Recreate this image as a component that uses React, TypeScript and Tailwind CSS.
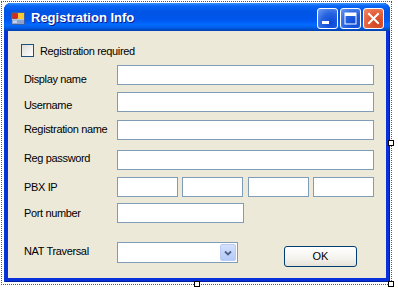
const labelFont = "font-['Liberation_Sans',Arial,sans-serif] text-[11px] leading-[13px] tracking-[-0.35px] text-black"

function Field({ w }: { w: string }) {
  return <div className={`${w} h-[20px] border border-[#7f9db9] bg-white`} />
}

function Row({ label, mt, pt, children }: { label: string; mt: string; pt: string; children: React.ReactNode }) {
  return (
    <div className={`${mt} flex items-start h-[20px] pl-[16px]`}>
      <div className={`w-[93px] ${pt} ${labelFont} whitespace-nowrap`}>{label}</div>
      {children}
    </div>
  )
}

function TitleButton({ kind }: { kind: 'min' | 'max' | 'close' }) {
  const bg =
    kind === 'close'
      ? 'bg-[radial-gradient(circle_at_70%_75%,#cc4622_0%,#e35a33_45%,#f08b68_100%)]'
      : 'bg-[radial-gradient(circle_at_70%_75%,#0c48d8_0%,#2663e0_50%,#6d9cf5_100%)]'
  return (
    <div className={`w-[21px] h-[21px] rounded-[3px] border border-white ${bg} flex items-center justify-center`}>
      <svg width="19" height="19" viewBox="0 0 19 19">
        {kind === 'min' && <rect x="4" y="12" width="7" height="3" fill="#fff" />}
        {kind === 'max' && (
          <>
            <rect x="4" y="4" width="11" height="11" fill="none" stroke="#fff" strokeWidth="1" />
            <rect x="4" y="4" width="11" height="3" fill="#fff" />
          </>
        )}
        {kind === 'close' && (
          <path d="M5 5 L14 14 M14 5 L5 14" stroke="#fff" strokeWidth="2" strokeLinecap="square" />
        )}
      </svg>
    </div>
  )
}

function Handle({ pos }: { pos: string }) {
  return <div className={`absolute ${pos} w-[6px] h-[6px] bg-white border border-black`} />
}

export default function App() {
  return (
    <div className="w-[398px] h-[294px] bg-white overflow-hidden">
      <div className="relative ml-[1px] mt-[1px] w-[391px] h-[284px] border border-dotted border-[#555] pl-[2px] pt-[1px]">
        <div className="w-[386px] h-[279px] rounded-t-[7px] bg-[#0831d9] flex flex-col overflow-hidden shadow-[inset_-1px_0_0_#001ea0,inset_1px_0_0_#0a3ad0,inset_0_-1px_0_#001ea0]">
          {/* title bar */}
          <div className="h-[28px] flex items-start bg-[linear-gradient(180deg,#3d95ff_0%,#0a66f5_10%,#0055e5_30%,#0055eb_56%,#005bf5_66%,#026afe_76%,#0062ef_86%,#0052d6_92%,#0040ab_100%)]">
            <svg className="ml-[7px] mt-[9px]" width="14" height="13" viewBox="0 0 14 13">
              <rect x="0.5" y="0.5" width="13" height="12" fill="#dfe8f7" stroke="#3b5ea8" />
              <rect x="1.5" y="1.5" width="5" height="5" fill="#d8281e" stroke="#7a1a12" strokeWidth="0.6" />
              <rect x="7" y="1" width="6" height="6" fill="#f7c735" />
              <rect x="1" y="7.5" width="12" height="4.5" fill="#8aa2cc" />
              <rect x="2" y="8.5" width="4" height="2.5" fill="#c5d3ee" />
            </svg>
            <div className="ml-[6px] mt-[7px] font-['Liberation_Sans',Arial,sans-serif] font-bold text-[13px] leading-[16px] text-white [text-shadow:1px_1px_#0a1a8c] whitespace-nowrap">
              Registration Info
            </div>
            <div className="ml-auto mr-[6px] mt-[5px] flex gap-[2px]">
              <TitleButton kind="min" />
              <TitleButton kind="max" />
              <TitleButton kind="close" />
            </div>
          </div>

          {/* client area */}
          <div className="mx-[4px] mb-[4px] flex-1 bg-[#ece9d8] pt-[13px]">
            <div className="ml-[13px] flex items-start h-[13px]">
              <div className="w-[13px] h-[13px] border border-[#1c5180] bg-[linear-gradient(135deg,#dcdcd7,#ffffff)]" />
              <div className={`ml-[6px] pt-[1px] ${labelFont} whitespace-nowrap`}>Registration required</div>
            </div>

            <Row label="Display name" mt="mt-[8px]" pt="pt-[8px]">
              <Field w="w-[257px]" />
            </Row>
            <Row label="Username" mt="mt-[7px]" pt="pt-[7px]">
              <Field w="w-[257px]" />
            </Row>
            <Row label="Registration name" mt="mt-[8px]" pt="pt-[3px]">
              <Field w="w-[257px]" />
            </Row>
            <Row label="Reg password" mt="mt-[10px]" pt="pt-[2px]">
              <Field w="w-[257px]" />
            </Row>
            <Row label="PBX IP" mt="mt-[7px]" pt="pt-[4px]">
              <div className="w-[257px] flex justify-between">
                <Field w="w-[61px]" />
                <Field w="w-[61px]" />
                <Field w="w-[61px]" />
                <Field w="w-[61px]" />
              </div>
            </Row>
            <Row label="Port number" mt="mt-[6px]" pt="pt-[4px]">
              <Field w="w-[127px]" />
            </Row>

            <div className="mt-[19px] flex items-start h-[21px] pl-[16px]">
              <div className={`w-[93px] pt-[3px] ${labelFont} whitespace-nowrap`}>NAT Traversal</div>
              <div className="w-[121px] h-[21px] border border-[#7f9db9] bg-white flex justify-end p-[1px]">
                <div className="w-[16px] h-full rounded-[2px] border border-[#b9cbf3] bg-[linear-gradient(180deg,#d4e0fd,#b3c9f8)] flex items-center justify-center">
                  <svg width="8" height="6" viewBox="0 0 8 6">
                    <path d="M1 1.5 L4 4.5 L7 1.5" fill="none" stroke="#4d6185" strokeWidth="1.8" />
                  </svg>
                </div>
              </div>
              <div className="ml-[46px] mt-[4px] w-[73px] h-[21px] rounded-[3px] border border-[#003c74] bg-[linear-gradient(180deg,#ffffff_0%,#f4f3ee_60%,#e4e1d6_100%)] flex items-center justify-center font-['Liberation_Sans',Arial,sans-serif] text-[11px] text-black">
                OK
              </div>
            </div>
          </div>
        </div>

        <Handle pos="left-[386px] top-[138px]" />
        <Handle pos="left-[192px] top-[279px]" />
        <Handle pos="left-[386px] top-[279px]" />
      </div>
    </div>
  )
}
